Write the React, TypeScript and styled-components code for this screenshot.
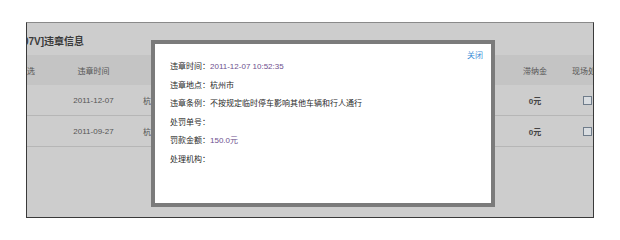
import React from "react";
import styled, { createGlobalStyle } from "styled-components";

const Global = createGlobalStyle`
  html, body { margin: 0; padding: 0; background: #ffffff; }
  body { font-family: "Liberation Sans", "Noto Sans CJK SC", sans-serif; }
`;

const Page = styled.div`
  width: 620px;
  height: 237px;
  padding: 22px 0 0 26px;
  box-sizing: border-box;
  background: #ffffff;
`;

const Panel = styled.div`
  position: relative;
  width: 568px;
  height: 196px;
  box-sizing: border-box;
  background: #cdcdcd;
  border: 1px solid #3a3a3a;
  border-top-color: #8a8a8a;
  overflow: hidden;
`;

const Title = styled.div`
  height: 32px;
  box-sizing: border-box;
  padding-top: 13px;
  margin-left: -4px;
  font-size: 10px;
  line-height: 12px;
  font-weight: 700;
  color: #3a3a3a;
  white-space: nowrap;
  font-family: "Liberation Sans", "Noto Sans CJK SC", sans-serif;
`;

const Table = styled.div`
  margin-left: -30px;
  width: 614px;
`;

const Row = styled.div<{ $head?: boolean }>`
  display: grid;
  grid-template-columns: 60px 73px 1fr 60px 46px;
  height: ${(p) => (p.$head ? "30px" : "31px")};
  box-sizing: border-box;
  align-items: center;
  background: ${(p) => (p.$head ? "#c4c4c4" : "transparent")};
  border-bottom: ${(p) => (p.$head ? "none" : "1px solid #b6b6b6")};
  font-size: 8px;
  color: #555;
  font-family: "Liberation Sans", "Noto Sans CJK SC", sans-serif;
`;

const Cell = styled.div<{ $align?: "left" | "center"; $bold?: boolean }>`
  text-align: ${(p) => p.$align ?? "center"};
  padding-left: ${(p) => (p.$align === "left" ? "13px" : "0")};
  white-space: nowrap;
  overflow: hidden;
  font-weight: ${(p) => (p.$bold ? 700 : 400)};
  color: ${(p) => (p.$bold ? "#444" : "#555")};
  display: flex;
  justify-content: ${(p) => (p.$align === "left" ? "flex-start" : "center")};
  align-items: center;
`;

const Check = styled.span`
  display: inline-block;
  width: 7px;
  height: 7px;
  border: 1px solid #6f7c8a;
  background: #d9dde1;
  margin-left: -2px;
`;

const Modal = styled.div`
  position: absolute;
  left: 124px;
  top: 17px;
  width: 344px;
  height: 167px;
  box-sizing: border-box;
  border: 4px solid #7b7b7b;
  background: #ffffff;
  padding: 14px 0 0 15px;
  font-family: "Liberation Sans", "Noto Sans CJK SC", sans-serif;
`;

const Close = styled.span`
  position: absolute;
  top: 7px;
  right: 8px;
  font-size: 8px;
  line-height: 10px;
  color: #3f8fd8;
  cursor: pointer;
`;

const Line = styled.div`
  height: 18.6px;
  line-height: 18.6px;
  font-size: 8px;
  color: #2a2a2a;
  white-space: nowrap;
`;

const Label = styled.span`
  color: #2a2a2a;
`;

const Value = styled.span<{ $accent?: boolean }>`
  color: ${(p) => (p.$accent ? "#6e4f8e" : "#2a2a2a")};
`;

const rows = [
  { date: "2011-12-07", place: "杭州市", late: "0元" },
  { date: "2011-09-27", place: "杭州市", late: "0元" },
];

const details: { label: string; value: string; accent?: boolean }[] = [
  { label: "违章时间：", value: "2011-12-07 10:52:35", accent: true },
  { label: "违章地点：", value: "杭州市" },
  { label: "违章条例：", value: "不按规定临时停车影响其他车辆和行人通行" },
  { label: "处罚单号：", value: "" },
  { label: "罚款金额：", value: "150.0元", accent: true },
  { label: "处理机构：", value: "" },
];

export default function App() {
  return (
    <>
      <Global />
      <Page>
        <Panel>
          <Title>07V]违章信息</Title>
          <Table>
            <Row $head>
              <Cell>全选</Cell>
              <Cell>违章时间</Cell>
              <Cell>违章地点</Cell>
              <Cell>滞纳金</Cell>
              <Cell>现场处理</Cell>
            </Row>
            {rows.map((r) => (
              <Row key={r.date}>
                <Cell />
                <Cell>{r.date}</Cell>
                <Cell $align="left">{r.place}</Cell>
                <Cell $bold>{r.late}</Cell>
                <Cell>
                  <Check />
                </Cell>
              </Row>
            ))}
          </Table>
          <Modal>
            <Close>关闭</Close>
            {details.map((d) => (
              <Line key={d.label}>
                <Label>{d.label}</Label>
                <Value $accent={d.accent}>{d.value}</Value>
              </Line>
            ))}
          </Modal>
        </Panel>
      </Page>
    </>
  );
}
